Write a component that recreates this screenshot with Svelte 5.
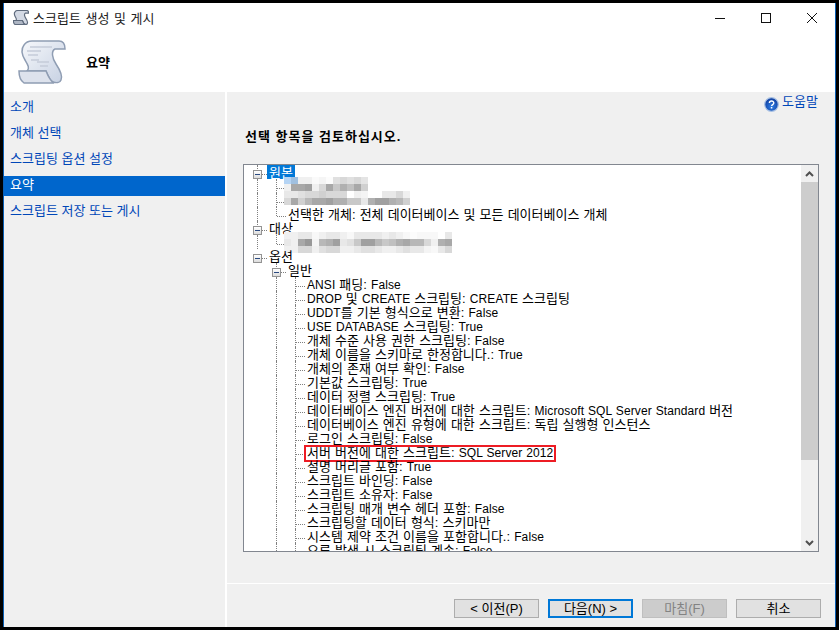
<script>
  const steps = ['소개', '개체 선택', '스크립팅 옵션 설정', '요약', '스크립트 저장 또는 게시'];
  const current = 3;

  const blurA = [
    ['#b5d4f4', '#a0c0e0', '#f0f0f0', '#f0f0f0', '#fafafa', '#f5f5f5', '#fcfcfc', '#e0e0e0', '#d8d8d8', '#e0e0e0', '#d8d8d8', '#e4e4e4'],
    ['#f0f0f0', '#a8a8a8', '#a8a8a8', '#a0a0a0', '#f0f0f0', '#d8d8d8', '#a8a8a8', '#c8c8c8', '#b0b0b0', '#c0c0c0', '#a8a8a8', '#d0d0d0']
  ];
  const blurB = [
    ['#e8e8e8', '#e8e8e8', '#e0e0e0', '#d8d8d8', '#d8d8d8', '#d0d0d0', '#d8d8d8', '#d8d8d8', '#d8d8d8', '#ffffff', '#f0f0f0', '#f4f4f4', '#ffffff', '#ffffff', '#e8e8e8', '#e8e8e8', '#d8d8d8', '#f0f0f0'],
    ['#d8d8d8', '#a8a8a8', '#d0d0d0', '#b8b8b8', '#a8a8a8', '#a8a8a8', '#a0a0a0', '#b0b0b0', '#b0b0b0', '#c8c8c8', '#c8c8c8', '#e8e8e8', '#b0b0b0', '#a0a0a0', '#a0a0a0', '#b0b0b0', '#b8b8b8', '#d0d0d0']
  ];
  const blurC = [
    ['#f0f0f0', '#f0f0f0', '#e8e8e8', '#e8e8e8', '#f8f8f8', '#f0f0f0', '#e8e8e8', '#e8e8e8', '#f0f0f0', '#f8f8f8', '#e8e8e8', '#e8e8e8', '#e8e8e8', '#e8e8e8', '#f0f0f0', '#e8e8e8', '#f0f0f0', '#f8f8f8', '#fcfcfc', '#f8f8f8', '#f8f8f8', '#f8f8f8', '#ffffff', '#e8e8e8'],
    ['#e8e8e8', '#f0f0f0', '#a8a8a8', '#989898', '#f4f4f4', '#b8b8b8', '#b0b0b0', '#a0a0a0', '#e8e8e8', '#e0e0e0', '#c8c8c8', '#a0a0a0', '#a0a0a0', '#b8b8b8', '#c8c8c8', '#c0c0c0', '#b0b0b0', '#a8a8a8', '#b8b8b8', '#b8b8b8', '#d8d8d8', '#f0f0f0', '#b0b0b0', '#a8a8a8'],
    ['#f0f0f0', '#f0f0f0', '#d8d8d8', '#d8d8d8', '#f0f0f0', '#e0e0e0', '#d8d8d8', '#d8d8d8', '#f0f0f0', '#f0f0f0', '#e8e8e8', '#e0e0e0', '#e0e0e0', '#e8e8e8', '#f0f0f0', '#f0f0f0', '#e8e8e8', '#e0e0e0', '#e8e8e8', '#e8e8e8', '#f4f4f4', '#f8f8f8', '#e8e8e8', '#d8d8d8']
  ];

  const general = [
    'ANSI 패딩: False',
    'DROP 및 CREATE 스크립팅: CREATE 스크립팅',
    'UDDT를 기본 형식으로 변환: False',
    'USE DATABASE 스크립팅: True',
    '개체 수준 사용 권한 스크립팅: False',
    '개체 이름을 스키마로 한정합니다.: True',
    '개체의 존재 여부 확인: False',
    '기본값 스크립팅: True',
    '데이터 정렬 스크립팅: True',
    '데이터베이스 엔진 버전에 대한 스크립트: Microsoft SQL Server Standard 버전',
    '데이터베이스 엔진 유형에 대한 스크립트: 독립 실행형 인스턴스',
    '로그인 스크립팅: False',
    '서버 버전에 대한 스크립트: SQL Server 2012',
    '설명 머리글 포함: True',
    '스크립트 바인딩: False',
    '스크립트 소유자: False',
    '스크립팅 매개 변수 헤더 포함: False',
    '스크립팅할 데이터 형식: 스키마만',
    '시스템 제약 조건 이름을 포함합니다.: False',
    '오류 발생 시 스크립팅 계속: False'
  ];

  // cols: one entry per indent level. v = line, mid = line + branch, end = last branch, t/tl = toggle
  const rows = [
    { cols: ['t'], text: '원본', selected: true },
    { cols: ['v', 'mid'], blur: blurA, up: true },
    { cols: ['v', 'mid'], blur: blurB, up: true },
    { cols: ['v', 'end'], text: '선택한 개체: 전체 데이터베이스 및 모든 데이터베이스 개체' },
    { cols: ['t'], text: '대상' },
    { cols: ['v', 'end'], blur: blurC },
    { cols: ['tl'], text: '옵션' },
    { cols: ['', 't'], text: '일반' },
    ...general.map((text) => ({
      cols: ['', 'v', 'mid'],
      text,
      marked: text.startsWith('서버 버전')
    }))
  ];

  // latin runs are set a bit smaller than the hangul
  const runs = (text) => text.split(/([A-Za-z0-9][A-Za-z0-9 ]*)/).filter(Boolean);
  const isLatin = (run) => /^[A-Za-z0-9]/.test(run);

  const scrollBody = 'M6 5C8 2 10 1 14 1H41C45 1 47 4 47 9H37C33 11 34 18 38 24C42 30 45 36 43 40C42 43 38 43 35 42C32 41 30 36 28 31H9C12 28 10 25 7 20C4 15 3 9 6 5Z';
  const scrollFoot = 'M1 31H28C30 36 32 41 36 43H6C3 41 1 36 1 31Z';
</script>

<div class="window">
  <div class="titlebar">
    <svg class="app-icon" width="16" height="15" viewBox="0 0 48 44">
      <path d={scrollBody} fill="#d3d9e4" stroke="#5f6b7d" stroke-width="3.5"/>
      <path d={scrollFoot} fill="#aeb6c4" stroke="#5f6b7d" stroke-width="3.5"/>
    </svg>
    <span class="title">스크립트 생성 및 게시</span>
    <div class="controls">
      <svg width="12" height="12" viewBox="0 0 12 12"><path d="M1 6.5h10" stroke="#111"/></svg>
      <svg width="12" height="12" viewBox="0 0 12 12"><rect x="1.5" y="1.5" width="9" height="9" fill="none" stroke="#111"/></svg>
      <svg width="12" height="12" viewBox="0 0 12 12"><path d="M1 1l10 10M11 1L1 11" stroke="#111"/></svg>
    </div>
  </div>

  <div class="header">
    <svg class="scroll" width="48" height="44" viewBox="0 0 48 44">
      <defs>
        <linearGradient id="paper" x1="0" y1="0" x2="1" y2="1">
          <stop offset="0" stop-color="#f6f8fb"/>
          <stop offset="1" stop-color="#c6d0e2"/>
        </linearGradient>
      </defs>
      <path d={scrollBody} fill="url(#paper)" stroke="#8f9db3" stroke-width="1.5"/>
      <path d="M12 7h22M9 11h14M10 15h10M13 20h8M19 22h12M22 26h8" stroke="#c5ccd9" stroke-width="1.3"/>
      <path d={scrollFoot} fill="#dde2ec" stroke="#8f9db3" stroke-width="1.5"/>
    </svg>
    <span class="page-title">요약</span>
  </div>

  <div class="body">
    <nav class="steps">
      {#each steps as step, i}
        <div class="step" class:active={i === current}>{step}</div>
      {/each}
    </nav>

    <main class="content">
      <div class="help">
        <svg width="15" height="15" viewBox="0 0 15 15">
          <defs>
            <radialGradient id="ball" cx="0.5" cy="0.65" r="0.6">
              <stop offset="0" stop-color="#2f7ee6"/>
              <stop offset="1" stop-color="#123f9e"/>
            </radialGradient>
          </defs>
          <circle cx="7.5" cy="7.5" r="6.8" fill="url(#ball)" stroke="#a7c0e4" stroke-width="1.2"/>
          <path d="M5.4 6c0-2.6 4.4-2.6 4.4 0 0 1.6-2.2 1.5-2.2 3.1" fill="none" stroke="#fff" stroke-width="1.4"/>
          <rect x="6.8" y="10" width="1.5" height="1.5" fill="#fff"/>
        </svg>
        <span>도움말</span>
      </div>
      <h2>선택 항목을 검토하십시오.</h2>

      <div class="treebox">
        <div class="tree">
          {#each rows as row}
            <div class="row">
              {#each row.cols as col}
                <span class="col {col}">
                  {#if col === 't' || col === 'tl'}
                    <span class="toggle"></span>
                  {/if}
                </span>
              {/each}
              {#if row.blur}
                <div class="blur" class:up={row.up}>
                  {#each row.blur as line}
                    <div class="blur-line">
                      {#each line as c}
                        <span style="background:{c}"></span>
                      {/each}
                    </div>
                  {/each}
                </div>
              {:else}
                <span class="label" class:selected={row.selected} class:marked={row.marked}>
                  {#each runs(row.text) as run}{#if isLatin(run)}<span class="latin">{run}</span>{:else}{run}{/if}{/each}
                </span>
              {/if}
            </div>
          {/each}
        </div>
        <div class="scrollbar">
          <div class="arrow">
            <svg width="9" height="6" viewBox="0 0 9 6"><path d="M1 5l3.5-3.5L8 5" fill="none" stroke="#505050" stroke-width="2"/></svg>
          </div>
          <div class="track"><div class="thumb"></div></div>
          <div class="arrow">
            <svg width="9" height="6" viewBox="0 0 9 6"><path d="M1 1l3.5 3.5L8 1" fill="none" stroke="#505050" stroke-width="2"/></svg>
          </div>
        </div>
      </div>

      <div class="footer">
        <button>&lt; 이전(P)</button>
        <button class="primary">다음(N) &gt;</button>
        <button disabled>마침(F)</button>
        <button>취소</button>
      </div>
    </main>
  </div>
</div>

<style>
  :global(body) {
    margin: 0;
    background: #000;
  }

  .window {
    box-sizing: border-box;
    width: 833px;
    height: 624px;
    margin: 3px 0 0 3px;
    border-left: 1px solid #0a5fb4;
    border-right: 1px solid #0a5fb4;
    background: #fff;
    display: flex;
    flex-direction: column;
    overflow: hidden;
    font-family: "Liberation Sans", "Noto Sans CJK KR", sans-serif;
    font-size: 13px;
    color: #000;
  }

  .titlebar {
    height: 29px;
    flex: none;
    display: flex;
    align-items: center;
    padding-left: 9px;
  }

  .title {
    margin-left: 4px;
    color: #222;
    word-spacing: 1px;
  }

  .controls {
    margin-left: auto;
    display: flex;
    gap: 34px;
    padding-right: 17px;
  }

  .header {
    height: 60px;
    flex: none;
    display: flex;
    align-items: center;
    padding-left: 14px;
  }

  .page-title {
    margin-left: 20px;
    font-weight: 700;
    margin-top: -2px;
  }

  .body {
    flex: 1;
    display: flex;
    gap: 2px;
    min-height: 0;
  }

  .steps {
    width: 221px;
    flex: none;
    background: #f0f0f0;
    padding-top: 6px;
    display: flex;
    flex-direction: column;
    gap: 6px;
  }

  .step {
    height: 20px;
    line-height: 17px;
    padding-left: 6px;
    color: #0047b8;
  }

  .step.active {
    background: #0066cc;
    color: #fff;
  }

  .content {
    flex: 1;
    background: #f0f0f0;
    display: flex;
    flex-direction: column;
    min-width: 0;
  }

  .help {
    align-self: flex-end;
    display: flex;
    align-items: center;
    gap: 3px;
    margin: 2px 17px 0 0;
    height: 18px;
    color: #0047b8;
  }

  .help svg {
    margin-top: 2px;
  }

  .help span {
    margin-top: -5px;
  }

  h2 {
    margin: 15px 0 0 18px;
    height: 19px;
    line-height: 19px;
    font-size: 13px;
    font-weight: 700;
    letter-spacing: 1px;
  }

  .treebox {
    margin: 18px 0 0 16px;
    width: 576px;
    height: 388px;
    box-sizing: border-box;
    border: 1px solid #828790;
    background: #fff;
    display: flex;
  }

  .tree {
    flex: 1;
    min-width: 0;
    overflow: hidden;
    padding-left: 4px;
  }

  .row {
    height: 14px;
    display: flex;
    align-items: center;
    white-space: nowrap;
  }

  .col {
    width: 19px;
    height: 14px;
    flex: none;
    position: relative;
  }

  .col.v::before,
  .col.mid::before,
  .col.end::before,
  .col.t::before {
    content: '';
    position: absolute;
    left: 9px;
    top: 0;
    bottom: 0;
    border-left: 1px dotted #808080;
  }

  .col.end::before {
    bottom: 5px;
  }

  .col.mid::after,
  .col.end::after,
  .col.t::after,
  .col.tl::after {
    content: '';
    position: absolute;
    left: 10px;
    top: 9px;
    width: 9px;
    border-top: 1px dotted #808080;
  }

  .toggle {
    position: absolute;
    z-index: 1;
    left: 5px;
    top: 5px;
    width: 7px;
    height: 7px;
    border: 1px solid #939393;
    background: linear-gradient(#fff, #dcdcdc);
  }

  .toggle::after {
    content: '';
    position: absolute;
    left: 1px;
    right: 1px;
    top: 3px;
    height: 1px;
    background: #2a4a80;
  }

  .label {
    height: 14px;
    line-height: 15px;
    padding: 0 2px;
    position: relative;
    word-spacing: 0.5px;
  }

  .latin {
    font-size: 12px;
    letter-spacing: 0.1px;
  }

  .label.selected {
    background: #0078d7;
    color: #fff;
  }

  .label.marked::after {
    content: '';
    position: absolute;
    left: -1px;
    top: 0;
    right: -1px;
    bottom: -3px;
    border: 2px solid #ed1c24;
  }

  .blur {
    position: relative;
    margin-left: -2px;
  }

  .blur.up {
    margin-top: -4px;
  }

  .blur-line {
    display: flex;
    height: 7px;
  }

  .blur-line span {
    width: 7px;
    flex: none;
  }

  .scrollbar {
    width: 17px;
    flex: none;
    background: #f0f0f0;
    display: flex;
    flex-direction: column;
  }

  .arrow {
    height: 17px;
    flex: none;
    display: flex;
    align-items: center;
    justify-content: center;
  }

  .track {
    flex: 1;
  }

  .thumb {
    height: 278px;
    background: #cdcdcd;
  }

  .footer {
    margin-top: auto;
    height: 44px;
    box-sizing: border-box;
    border-top: 1px solid #fff;
    display: flex;
    justify-content: flex-end;
    gap: 9px;
    padding: 15px 14px 0 0;
  }

  button {
    box-sizing: border-box;
    width: 85px;
    height: 19px;
    padding: 0;
    border: 1px solid #adadad;
    background: #e1e1e1;
    font: inherit;
    line-height: 15px;
    color: #000;
  }

  button.primary {
    border: 2px solid #0078d7;
  }

  button:disabled {
    background: #cccccc;
    border-color: #bfbfbf;
    color: #838383;
  }
</style>
